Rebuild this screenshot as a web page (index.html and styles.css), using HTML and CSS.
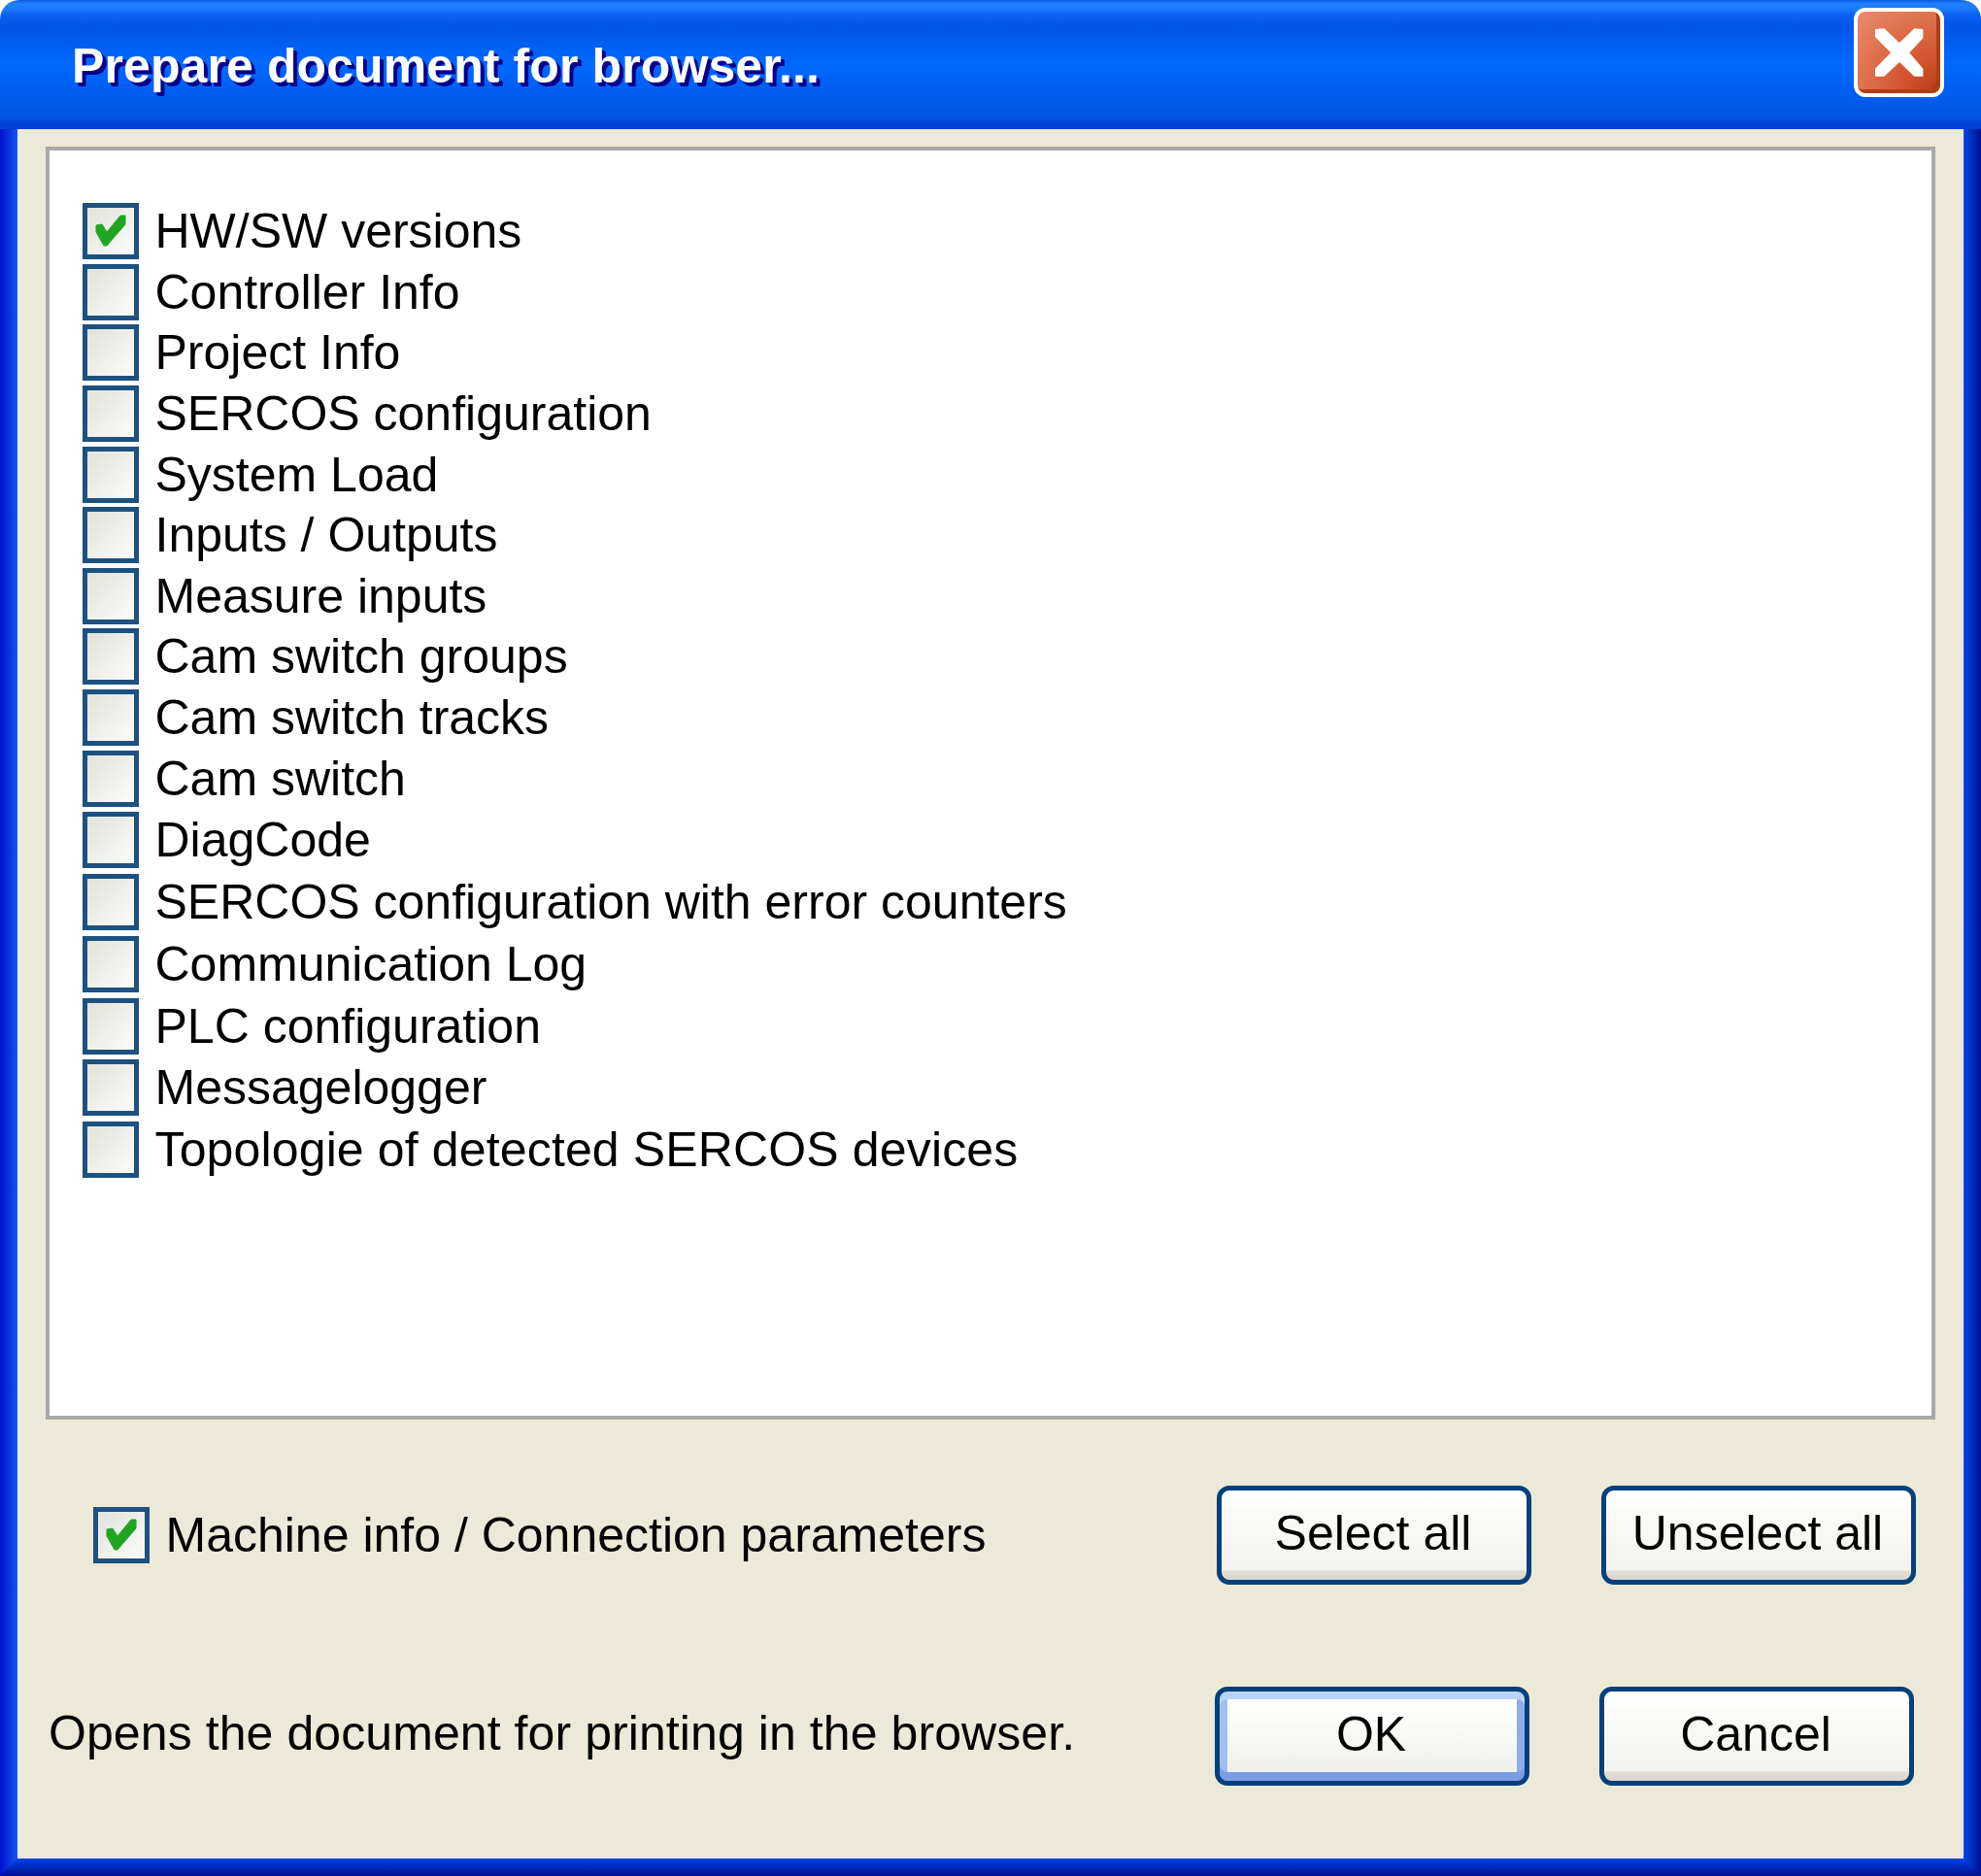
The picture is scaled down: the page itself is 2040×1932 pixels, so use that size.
FILE: index.html
```html
<!DOCTYPE html>
<html lang="en">
<head>
    <meta charset="UTF-8">
    <title>Prepare document for browser...</title>
    <link rel="stylesheet" href="styles.css">
</head>
<body>

<div class="dialog">
    <div class="titlebar">
        <h1>Prepare document for browser...</h1>
        <div class="close">
            <svg viewBox="0 0 270 270" width="90" height="90">
                <path fill="#fff" d="M60 66 L60 90 L108 139 L60 188 L60 212 L88 212 L135 168 L181 212 L208 212 L208 188 L166 139 L208 94 L208 66 L181 64 L135 108 L88 64 Z"/>
            </svg>
        </div>
    </div>

    <div class="edge-left"></div>

    <div class="content">
        <div class="listbox">
            <div class="row">
                <span class="check">
                    <svg viewBox="0 0 48 48" width="48" height="48"><path class="tick" d="M9 18 L15 17 L20 25 L34 8 L39 8 L39 17 L20 39 L17 39 L9 25 Z"/></svg>
                </span>
                HW/SW versions
            </div>
            <div class="row"><span class="check"></span>Controller Info</div>
            <div class="row"><span class="check"></span>Project Info</div>
            <div class="row"><span class="check"></span>SERCOS configuration</div>
            <div class="row"><span class="check"></span>System Load</div>
            <div class="row"><span class="check"></span>Inputs / Outputs</div>
            <div class="row"><span class="check"></span>Measure inputs</div>
            <div class="row"><span class="check"></span>Cam switch groups</div>
            <div class="row"><span class="check"></span>Cam switch tracks</div>
            <div class="row"><span class="check"></span>Cam switch</div>
            <div class="row tall"><span class="check"></span>DiagCode</div>
            <div class="row tall"><span class="check"></span>SERCOS configuration with error counters</div>
            <div class="row tall"><span class="check"></span>Communication Log</div>
            <div class="row tall"><span class="check"></span>PLC configuration</div>
            <div class="row tall"><span class="check"></span>Messagelogger</div>
            <div class="row tall spaced"><span class="check"></span>Topologie of detected SERCOS devices</div>
        </div>

        <div class="actions actions-select">
            <div class="row">
                <span class="check">
                    <svg viewBox="0 0 48 48" width="48" height="48"><path class="tick" d="M9 18 L15 17 L20 25 L34 8 L39 8 L39 17 L20 39 L17 39 L9 25 Z"/></svg>
                </span>
                Machine info / Connection parameters
            </div>
            <div class="buttons">
                <button type="button">Select all</button>
                <button type="button">Unselect all</button>
            </div>
        </div>

        <div class="actions actions-confirm">
            <div class="hint">Opens the document for printing in the browser.</div>
            <div class="buttons">
                <button type="button" class="default">OK</button>
                <button type="button">Cancel</button>
            </div>
        </div>
    </div>

    <div class="edge-right"></div>
    <div class="edge-bottom"></div>
</div>

</body>
</html>
```

FILE: styles.css
```css
body {
    margin: 0;
    background-color: #fff;
    color: #000;
    font-family: 'Liberation Sans', Arial, sans-serif;
    font-size: 50px;
}

.dialog {
    width: 2040px;
    height: 1932px;
    display: grid;
    grid-template-columns: 18px 1fr 18px;
    grid-template-rows: 133px 1fr 18px;
}

.titlebar {
    grid-column: 1 / 4;
    grid-row: 1;
    display: flex;
    justify-content: space-between;
    align-items: flex-start;
    padding: 0 38px 0 74px;
    border-radius: 20px 20px 0 0;
    background: linear-gradient(to bottom,
        #0a5ce0 0,
        #2080ff 4px,
        #1a78fc 10px,
        #0a62f2 15px,
        #0056e8 28px,
        #0068ff 66px,
        #0058e8 112px,
        #0052e0 123px,
        #0040d2 125px,
        #0040d2 133px);
}

.titlebar h1 {
    margin: 38px 0 0;
    font-size: 50px;
    line-height: 60px;
    font-weight: bold;
    letter-spacing: 0.1px;
    color: #fff;
    text-shadow: 3px 3px 0 #00008c, 4px 4px 0 #00008c;
}

.close {
    width: 93px;
    height: 92px;
    margin-top: 8px;
    box-sizing: border-box;
    border: 4px solid #fff;
    border-radius: 12px;
    background: radial-gradient(circle at 100% 100%, #b03c14 0, #d0502a 28%, #dc6c48 60%, #ea8c74 100%);
    box-shadow: inset -4px -4px 0 #b03c14;
    overflow: hidden;
}

.close svg {
    display: block;
    margin: -4px 0 0 -2px;
}

.edge-left {
    grid-column: 1;
    grid-row: 2 / 4;
    background: linear-gradient(to right, #0010d0, #1058f0);
}

.edge-right {
    grid-column: 3;
    grid-row: 2 / 4;
    background: linear-gradient(to right, #0048e8, #00108c);
}

.edge-bottom {
    grid-column: 1 / 4;
    grid-row: 3;
    background: linear-gradient(to bottom, #0044e8, #000f90);
    clip-path: polygon(18px 0, calc(100% - 18px) 0, 100% 100%, 0 100%);
}

.content {
    grid-column: 2;
    grid-row: 2;
    padding-top: 18px;
    background-color: #ece9d8;
}

.listbox {
    margin: 0 29px;
    height: 1311px;
    box-sizing: border-box;
    padding: 52px 0 0 34px;
    background-color: #fff;
    border: 4px solid #a8a8a8;
}

.row {
    display: flex;
    align-items: center;
    height: 62.6px;
    white-space: nowrap;
}

.row.tall {
    height: 63.9px;
}

.row.spaced {
    letter-spacing: 0.14px;
}

.check {
    flex: none;
    width: 58px;
    height: 58px;
    margin-right: 16.5px;
    box-sizing: border-box;
    border: 5px solid #1c5180;
    background: linear-gradient(135deg, #e2e2dc, #fbfbf9);
}

.check svg {
    display: block;
}

.tick {
    fill: #21a521;
    stroke: #21a521;
    stroke-width: 1;
    stroke-linejoin: round;
}

.actions {
    display: flex;
    justify-content: space-between;
    align-items: center;
    height: 102px;
}

.actions-select {
    margin-top: 68px;
    padding: 0 49px 0 78px;
}

.actions-confirm {
    margin-top: 105px;
    padding: 0 51px 0 32px;
}

.hint {
    padding-bottom: 6px;
    letter-spacing: 0.08px;
}

.buttons {
    display: flex;
    gap: 72px;
}

button {
    width: 324px;
    height: 102px;
    padding: 0 2px 5px 0;
    font-family: inherit;
    font-size: 50px;
    color: #000;
    border: 5px solid #04407c;
    border-radius: 13px;
    background: linear-gradient(to bottom,
        #fff 0,
        #fff 10%,
        #fcfbf9 20%,
        #f7f7f3 55%,
        #f2f2ee 89%,
        #e3dfd7 90%,
        #d9d4ca 100%);
}

button.default {
    background: linear-gradient(to bottom, #fff 0, #fcfcfa 30%, #f3f3ef 70%, #f0ede8 100%);
    box-shadow:
        inset 0 8px 0 #b8d4f8,
        inset 0 -9px 0 #7c9ce6,
        inset 8px 0 0 #a0c0f0,
        inset -8px 0 0 #90aceb;
}
```
